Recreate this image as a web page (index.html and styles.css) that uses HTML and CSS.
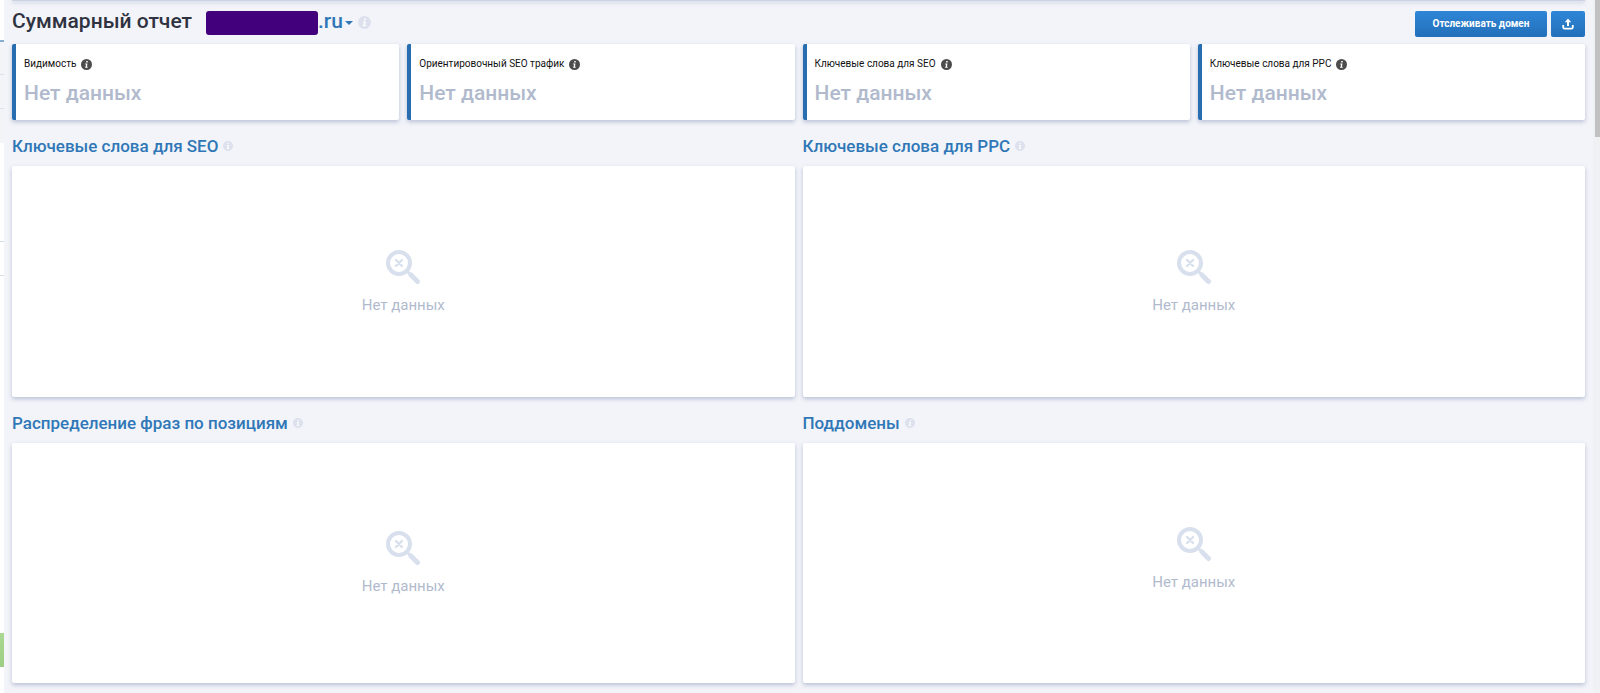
FILE: index.html
```
<!DOCTYPE html>
<html lang="ru">
<head>
  <meta charset="UTF-8" />
  <meta name="viewport" content="width=device-width, initial-scale=1.0" />
  <title>Суммарный отчет</title>
  <link rel="stylesheet" href="styles.css">
</head>
<body>
  <svg class="sprite" aria-hidden="true">
    <symbol id="info" viewBox="0 0 10 10">
      <circle cx="5" cy="5" r="5" fill="currentColor"/>
      <path d="M4.7 1.9h1.4v1.2H4.7zM3.8 4h2.1L5.4 7h.7v.9H3.8V7h.4l.4-2.1h-.8z" fill="#fff"/>
    </symbol>
    <symbol id="nodata" viewBox="0 0 36 36">
      <g fill="none" stroke="currentColor" stroke-linecap="round">
        <circle cx="14" cy="14" r="11" stroke-width="4"/>
        <path d="M23 23l2 2" stroke-width="3"/>
        <path d="M26 26l6.5 6.5" stroke-width="5"/>
        <path d="M11 11l6 6M17 11l-6 6" stroke-width="2.4"/>
      </g>
    </symbol>
  </svg>

  <div class="layout">
    <div class="sidebar">
      <div class="side-top"></div>
      <div class="side-item active"></div>
      <div class="side-item"></div>
      <div class="side-item last"></div>
      <div class="side-gap"></div>
      <div class="side-field"></div>
      <div class="side-space"></div>
      <div class="side-green"></div>
    </div>

    <main class="main">
      <div class="prev-panel"></div>
      <header class="header">
        <h1 class="title">Суммарный отчет</h1>
        <a class="domain" href="#"><span class="domain-mask"></span>.ru<span class="caret"></span></a>
        <svg class="info info-lg"><use href="#info"/></svg>
        <div class="actions">
          <button class="btn" type="button">Отслеживать домен</button>
          <button class="btn btn-icon" type="button" aria-label="Экспорт">
            <svg class="export" viewBox="0 0 12 12">
              <path d="M6 8V3" fill="none" stroke="#fff" stroke-width="2"/>
              <path d="M6 .6L9.2 4.2H2.8z" fill="#fff"/>
              <path d="M1.2 7v2.2q0 1.5 1.5 1.5h6.6q1.5 0 1.5-1.5V7" fill="none" stroke="#fff" stroke-width="1.8"/>
            </svg>
          </button>
        </div>
      </header>

      <section class="cards">
        <div class="card">
          <div class="card-label">Видимость <svg class="info info-dark"><use href="#info"/></svg></div>
          <div class="card-value">Нет данных</div>
        </div>
        <div class="card">
          <div class="card-label">Ориентировочный SEO трафик <svg class="info info-dark"><use href="#info"/></svg></div>
          <div class="card-value">Нет данных</div>
        </div>
        <div class="card">
          <div class="card-label">Ключевые слова для SEO <svg class="info info-dark"><use href="#info"/></svg></div>
          <div class="card-value">Нет данных</div>
        </div>
        <div class="card">
          <div class="card-label">Ключевые слова для PPC <svg class="info info-dark"><use href="#info"/></svg></div>
          <div class="card-value">Нет данных</div>
        </div>
      </section>

      <div class="reports">
        <section class="report">
          <h2 class="report-title"><a href="#">Ключевые слова для SEO</a><svg class="info"><use href="#info"/></svg></h2>
          <div class="panel">
            <div class="empty"><svg class="empty-icon"><use href="#nodata"/></svg>Нет данных</div>
          </div>
        </section>
        <section class="report">
          <h2 class="report-title"><a href="#">Ключевые слова для PPC</a><svg class="info"><use href="#info"/></svg></h2>
          <div class="panel">
            <div class="empty"><svg class="empty-icon"><use href="#nodata"/></svg>Нет данных</div>
          </div>
        </section>
        <section class="report">
          <h2 class="report-title"><a href="#">Распределение фраз по позициям</a><svg class="info"><use href="#info"/></svg></h2>
          <div class="panel">
            <div class="empty empty-tall"><svg class="empty-icon"><use href="#nodata"/></svg>Нет данных</div>
          </div>
        </section>
        <section class="report">
          <h2 class="report-title"><a href="#">Поддомены</a><svg class="info"><use href="#info"/></svg></h2>
          <div class="panel">
            <div class="empty"><svg class="empty-icon"><use href="#nodata"/></svg>Нет данных</div>
          </div>
        </section>
      </div>
    </main>

    <div class="scrollbar"><div class="thumb"></div></div>
  </div>
</body>
</html>
```
FILE: styles.css
```
* {
  box-sizing: border-box;
}

body {
  margin: 0;
  background: #f2f4f9;
  font-family: Roboto, sans-serif;
  color: #2f3240;
  overflow: hidden;
}

a {
  color: #2f77b7;
  text-decoration: none;
}

.sprite {
  position: absolute;
  width: 0;
  height: 0;
}

.layout {
  display: flex;
  min-height: 100vh;
}

/* visible edge of the side menu */
.sidebar {
  width: 4px;
  flex: none;
  display: flex;
  flex-direction: column;
  background: #fff;
}

.side-top {
  height: 40px;
}

.side-item {
  height: 34px;
  background: #f2f4f8;
  border-bottom: 1px solid #dde2ea;
}

.side-item.active {
  height: 35px;
  border-top: 2px solid #86add2;
}

.side-item.last {
  border-bottom: 0;
}

.side-gap {
  height: 98px;
}

.side-field {
  height: 35px;
  border: solid #d5dfe6;
  border-width: 1px 0;
}

.side-space {
  flex: 1;
}

.side-green {
  height: 34px;
  margin-bottom: 26px;
  background: linear-gradient(#aad892, #9bce82);
}

.main {
  flex: 1;
  min-width: 0;
  padding: 0 8px 8px;
}

.prev-panel {
  height: 1px;
  background: #ccd3e4;
  box-shadow: 0 1px 4px rgba(80, 95, 150, 0.6);
}

.header {
  display: flex;
  align-items: center;
  height: 43px;
}

.title {
  margin: 0 14px 3px 0;
  font-size: 21px;
  line-height: 26px;
  font-weight: 500;
}

.domain {
  display: flex;
  align-items: center;
  margin-bottom: 3px;
  font-size: 21px;
  line-height: 26px;
  font-weight: 500;
}

.domain-mask {
  width: 112px;
  height: 24px;
  margin-top: 4px;
  border-radius: 3px;
  background: #42007c;
}

.caret {
  margin: 4px 0 0 2px;
  border: solid transparent;
  border-width: 4px 4px 0;
  border-top-color: #2f77b7;
}

.info {
  width: 10px;
  height: 10px;
  color: #dce1ed;
}

.info-lg {
  width: 13px;
  height: 13px;
  margin-left: 5px;
}

.info-dark {
  width: 11px;
  height: 11px;
  color: #4c4c4c;
}

.actions {
  display: flex;
  gap: 4px;
  margin-left: auto;
  padding-top: 2px;
}

.btn {
  height: 26px;
  width: 132px;
  padding: 0;
  border: 0;
  border-radius: 2px;
  background: linear-gradient(#2f86d6, #226fba);
  color: #fff;
  font: bold 10px Roboto, sans-serif;
}

.btn-icon {
  display: flex;
  align-items: center;
  justify-content: center;
  width: 34px;
}

.export {
  width: 12px;
  height: 12px;
}

.cards {
  display: grid;
  grid-template-columns: repeat(4, 1fr);
  gap: 8px;
}

.card {
  height: 76px;
  padding: 12px 8px;
  background: #fff;
  border-left: 4px solid #276db0;
  border-radius: 2px;
  box-shadow: 0 2px 4px rgba(80, 95, 150, 0.35);
}

.card-label {
  display: flex;
  align-items: center;
  gap: 5px;
  font-size: 10px;
  line-height: 16px;
  color: #111;
}

.card-value {
  margin-top: 7px;
  font-size: 21px;
  line-height: 28px;
  font-weight: 500;
  color: #b1bacd;
}

.reports {
  display: grid;
  grid-template-columns: 1fr 1fr;
  column-gap: 8px;
}

.report {
  display: flex;
  flex-direction: column;
}

.report-title {
  display: flex;
  align-items: center;
  gap: 5px;
  height: 46px;
  margin: 0;
  padding-top: 6px;
  font-size: 17px;
  font-weight: 500;
}

.panel {
  flex: 1;
  background: #fff;
  border-radius: 2px;
  box-shadow: 0 2px 4px rgba(80, 95, 150, 0.35);
}

.empty {
  display: flex;
  flex-direction: column;
  align-items: center;
  justify-content: center;
  gap: 10px;
  height: 231px;
  font-size: 15px;
  line-height: 20px;
  color: #b1bacd;
}

.empty-tall {
  height: 240px;
}

.empty-icon {
  width: 36px;
  height: 36px;
  color: #d9e0ed;
}

.scrollbar {
  width: 7px;
  flex: none;
  padding-left: 2px;
  background: #f0f1f3;
}

.thumb {
  height: 137px;
  background: #c1c1c1;
}
```
